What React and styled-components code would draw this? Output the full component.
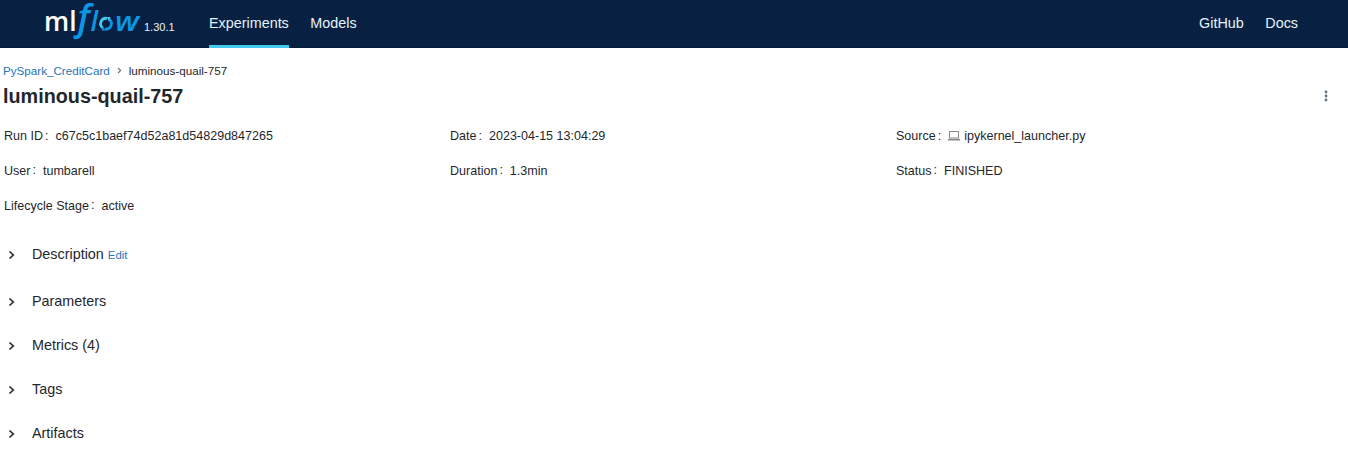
import React from 'react';
import styled, { createGlobalStyle } from 'styled-components';

const GlobalStyle = createGlobalStyle`
  * { box-sizing: border-box; }
  body {
    margin: 0;
    background: #fff;
    color: #1f272d;
    font-family: "Liberation Sans", Arial, sans-serif;
    font-size: 12.54px;
  }
`;

const Header = styled.header`
  display: flex;
  height: 48px;
  padding: 0 50px 0 45px;
  background: #082142;
  border-bottom: 1px solid #061b38;
`;

const LogoSvg = styled.svg`
  display: block;
  flex: none;
  width: 96px;
  height: 44px;
  overflow: visible;
`;

const Version = styled.span`
  width: 65px;
  padding: 21px 0 0 3px;
  color: #e7f1fb;
  font-size: 11px;
  line-height: 13px;
`;

const Nav = styled.nav`
  display: flex;
  gap: 21.5px;
  margin-left: ${(p) => (p.$end ? 'auto' : '3px')};
`;

const NavLink = styled.a`
  height: 48px;
  padding-top: 14px;
  color: #e7f1fb;
  font-size: 14.36px;
  line-height: 18px;
  border-bottom: 3px solid ${(p) => (p.$active ? '#43c9ed' : 'transparent')};
`;

const Breadcrumb = styled.div`
  display: flex;
  align-items: center;
  height: 16px;
  margin: 15px 0 0 3px;
  font-size: 11.65px;
  line-height: 12px;
  padding-bottom: 1px;
`;

const Link = styled.a`
  color: #2374bb;
  font-size: ${(p) => (p.$small ? '11.4px' : '11.65px')};
  padding-top: ${(p) => (p.$small ? '2px' : '0')};
`;

const Separator = styled.svg`
  width: 5px;
  height: 7px;
  margin: 0 7px;
`;

const TitleRow = styled.div`
  display: flex;
  align-items: center;
  justify-content: space-between;
  height: 34px;
  padding: 0 20px 0 3px;
`;

const Title = styled.h1`
  margin: 0;
  font-size: 19.8px;
  line-height: 28px;
`;

const MoreIcon = styled.svg`
  width: 4px;
  height: 12px;
`;

const Details = styled.dl`
  display: grid;
  grid-template-columns: repeat(3, 446px);
  grid-auto-rows: 35px;
  margin: 5px 0 0 4px;
`;

const Detail = styled.div`
  display: flex;
  align-items: center;
`;

const Label = styled.dt`
  &::after {
    content: ":";
    display: inline-block;
    margin: 0 7px 0 2px;
    transform: translateY(${(p) => (p.$raised ? '-1px' : '0')});
  }
`;

const Value = styled.dd`
  display: flex;
  align-items: center;
  gap: 4px;
  margin: 0;
`;

const LaptopIcon = styled.svg`
  width: 12px;
  height: 10px;
`;

const Sections = styled.div`
  padding: 6px 0 0 8px;
`;

const Section = styled.section`
  display: flex;
  align-items: center;
  height: ${(p) => (p.$tall ? 50 : 44)}px;
`;

const Chevron = styled.svg`
  width: 7px;
  height: 10px;
  margin: 2px 17px 0 0;
`;

const SectionTitle = styled.h2`
  margin: 0 4px 0 0;
  font-size: 14.36px;
  font-weight: 400;
`;

const Logo = () => (
  <LogoSvg viewBox="45 0 96 44" fontFamily='"Open Sans", sans-serif' fontSize="27" role="img" aria-label="mlflow">
    <text x="44" y="31" fill="#fff" fontWeight="600" textLength="32.5" lengthAdjust="spacingAndGlyphs">ml</text>
    <g fill="#0c96e8" fontStyle="italic" fontWeight="600">
      <text x="77.5" y="30" fontSize="36">f</text>
      <text x="90.5" y="31">l</text>
      <text x="115" y="31" textLength="24" lengthAdjust="spacingAndGlyphs">w</text>
    </g>
    <g fill="none" strokeWidth="2.8">
      <path d="M102.5 27.8 A5.4 5.4 0 0 1 107 18.4" stroke="#43c9ed" />
      <path d="M109.5 19.6 A5.4 5.4 0 0 1 105 29" stroke="#0c96e8" />
    </g>
    <path d="M106.8 17 L110.5 17 L109 21.5 Z" fill="#43c9ed" />
    <path d="M105.2 30.4 L101.5 30.4 L103 26 Z" fill="#0c96e8" />
  </LogoSvg>
);

const details = [
  ['Run ID', 'c67c5c1baef74d52a81d54829d847265'],
  ['Date', '2023-04-15 13:04:29'],
  ['Source', 'ipykernel_launcher.py'],
  ['User', 'tumbarell'],
  ['Duration', '1.3min'],
  ['Status', 'FINISHED'],
  ['Lifecycle Stage', 'active'],
];

const sections = ['Description', 'Parameters', 'Metrics (4)', 'Tags', 'Artifacts'];

export default function App() {
  return (
    <>
      <GlobalStyle />
      <Header>
        <Logo />
        <Version>1.30.1</Version>
        <Nav>
          <NavLink $active>Experiments</NavLink>
          <NavLink>Models</NavLink>
        </Nav>
        <Nav $end>
          <NavLink>GitHub</NavLink>
          <NavLink>Docs</NavLink>
        </Nav>
      </Header>
      <main>
        <Breadcrumb>
          <Link>PySpark_CreditCard</Link>
          <Separator viewBox="0 0 5 7">
            <path d="M1 1 L3.7 3.5 L1 6" fill="none" stroke="#5f7281" strokeWidth="1.1" />
          </Separator>
          <span>luminous-quail-757</span>
        </Breadcrumb>
        <TitleRow>
          <Title>luminous-quail-757</Title>
          <MoreIcon viewBox="0 0 4 12" fill="#5f7281">
            <circle cx="2" cy="2" r="1.4" />
            <circle cx="2" cy="6" r="1.4" />
            <circle cx="2" cy="10" r="1.4" />
          </MoreIcon>
        </TitleRow>
        <Details>
          {details.map(([label, value], i) => (
            <Detail key={label}>
              <Label $raised={i > 2}>{label}</Label>
              <Value>
                {label === 'Source' && (
                  <LaptopIcon viewBox="0 0 12 10" fill="none" stroke="#8a8a8a">
                    <rect x="1.5" y="0.5" width="9" height="6.5" />
                    <path d="M0 8.7 H12" strokeWidth="1.6" />
                  </LaptopIcon>
                )}
                {value}
              </Value>
            </Detail>
          ))}
        </Details>
        <Sections>
          {sections.map((name, i) => (
            <Section key={name} $tall={i === 0}>
              <Chevron viewBox="0 0 7 10">
                <path d="M1.5 1.5 L5.3 5 L1.5 8.5" fill="none" stroke="#1f272d" strokeWidth="1.6" />
              </Chevron>
              <SectionTitle>{name}</SectionTitle>
              {i === 0 && <Link $small>Edit</Link>}
            </Section>
          ))}
        </Sections>
      </main>
    </>
  );
}
